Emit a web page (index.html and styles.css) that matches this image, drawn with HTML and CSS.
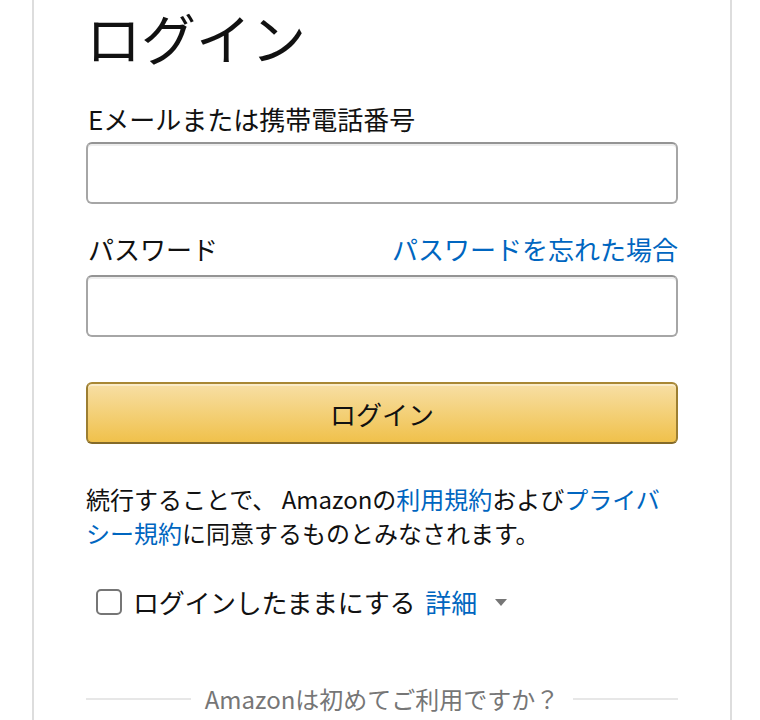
FILE: index.html
```html
<!DOCTYPE html>
<html lang="ja">
<head>
<meta charset="utf-8">
<title>ログイン</title>
<link rel="stylesheet" href="styles.css">
</head>
<body>
<div class="card">
  <h1 class="title">ログイン</h1>
  <form class="form">
    <label class="label" for="email">Eメールまたは携帯電話番号</label>
    <input class="input" id="email" type="email">
    <div class="label-row">
      <label class="label" for="password">パスワード</label>
      <a class="link" href="#">パスワードを忘れた場合</a>
    </div>
    <input class="input" id="password" type="password">
    <button class="btn" type="button">ログイン</button>
  </form>
  <p class="legal">続行することで、 Amazonの<a class="link" href="#">利用規約</a>および<a class="link" href="#">プライバシー規約</a>に同意するものとみなされます。</p>
  <div class="remember">
    <span class="checkbox"></span>
    <span class="remember-text">ログインしたままにする</span>
    <a class="link details" href="#">詳細</a>
    <span class="caret"></span>
  </div>
  <div class="divider">
    <span class="divider-line"></span>
    <span class="divider-text">Amazonは初めてご利用ですか？</span>
    <span class="divider-line"></span>
  </div>
</div>
</body>
</html>
```

FILE: styles.css
```css
html, body {
  margin: 0;
  padding: 0;
  background: #fff;
}
body {
  font-family: "Noto Sans CJK JP", "Noto Sans", sans-serif;
  color: #111;
  overflow: hidden;
}
.card {
  box-sizing: border-box;
  width: 700px;
  margin-left: 32px;
  border: 2px solid #ddd;
  border-top: none;
  padding: 0 52px 80px;
  min-height: 760px;
}
.title {
  margin: 0;
  padding-top: 3px;
  font-size: 55px;
  font-weight: 400;
  line-height: 67px;
}
.form {
  display: flex;
  flex-direction: column;
  margin-top: 30px;
}
.label {
  font-size: 26px;
  font-weight: 400;
  line-height: 38px;
  padding-left: 2px;
  margin-bottom: 4px;
}
.label-row {
  display: flex;
  justify-content: space-between;
  align-items: baseline;
  margin-top: 26px;
  margin-bottom: 7px;
}
.label-row .label {
  margin-bottom: 0;
}
.link {
  color: #0066c0;
  text-decoration: none;
  font-size: 26px;
  line-height: 38px;
}
.legal .link {
  font-size: inherit;
  line-height: inherit;
}
.input {
  box-sizing: border-box;
  height: 62px;
  width: 100%;
  border: 2px solid #a6a6a6;
  border-top-color: #949494;
  border-radius: 6px;
  box-shadow: inset 0 2px 0 rgba(0,0,0,0.07);
  background: #fff;
  margin: 0;
}
.btn {
  box-sizing: border-box;
  margin-top: 45px;
  height: 62px;
  width: 100%;
  border: 2px solid;
  border-color: #a88734 #9c7e31 #846a29;
  border-radius: 6px;
  background: linear-gradient(to bottom, #f7dfa5, #f0c14b);
  box-shadow: inset 0 2px 0 rgba(255,255,255,0.4);
  font-family: inherit;
  font-size: 26px;
  color: #111;
  padding: 0;
}
.legal {
  margin: 38px 0 0;
  font-size: 24px;
  line-height: 34px;
}
.remember {
  display: flex;
  align-items: center;
  margin-top: 33px;
  padding-left: 10px;
  height: 38px;
}
.checkbox {
  box-sizing: border-box;
  width: 26px;
  height: 26px;
  border: 2px solid #767676;
  border-radius: 5px;
  margin-right: 11px;
}
.remember-text {
  font-size: 26px;
  line-height: 38px;
  letter-spacing: -0.3px;
}
.details {
  margin-left: 10px;
}
.caret {
  width: 0;
  height: 0;
  border-left: 6px solid transparent;
  border-right: 6px solid transparent;
  border-top: 7px solid #767676;
  margin-left: 18px;
}
.divider {
  display: flex;
  align-items: center;
  margin-top: 61px;
  gap: 14px;
}
.divider-line {
  flex: 1;
  height: 2px;
  background: #e7e7e7;
}
.divider-text {
  font-size: 24px;
  line-height: 34px;
  color: #767676;
}
```
